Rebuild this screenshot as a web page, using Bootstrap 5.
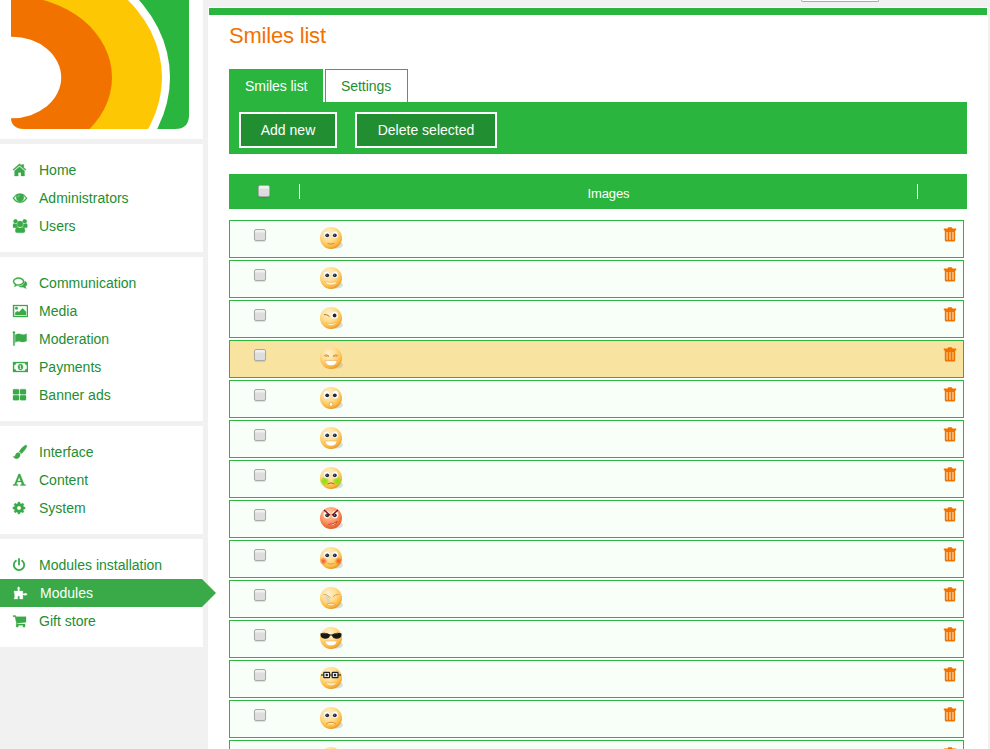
<!DOCTYPE html>
<html lang="en">
<head>
<meta charset="utf-8">
<title>Smiles list</title>
<link href="https://cdn.jsdelivr.net/npm/bootstrap@5.3.0/dist/css/bootstrap.min.css" rel="stylesheet">
<style>
  :root { --leaf: #29b53e; --leaf-dark: #228e32; --menu: #3aaa49; --orange: #f27200; }
  body { background: #f1f1f1; font-family: "Liberation Sans", Arial, sans-serif; font-size: 14px; line-height: 20px; height: 749px; overflow: hidden; letter-spacing: .01px; }
  .side { width: 203px; margin-right: 5px; gap: 5px; }
  .side-logo { height: 139px; }
  .side-logo svg { display: block; }
  .side-menu { padding: 12px 0; }
  .side-menu a { height: 28px; padding-left: 12px; color: var(--leaf-dark); }
  .side-menu svg { width: 16px; height: 16px; margin-right: 11px; fill: var(--menu); stroke: var(--menu); stroke-width: .3; }
  .side-menu a.current { background: var(--menu); color: #fff; width: 216px; position: relative; clip-path: polygon(0 0, 202px 0, 216px 50%, 202px 100%, 0 100%); padding-left: 13px; }
  .side-menu a.current svg { fill: #fff; stroke: #fff; }
  .topline { height: 7px; }
  .topline span { width: 78px; height: 2px; margin-right: 109px; background: #fff; border: 1px solid #aaa; border-top: 0; border-radius: 0 0 2px 2px; }
  .panel { width: 780px; height: 742px; padding: 1px 1px 0; }
  .panel-bar { height: 7px; background: var(--leaf); }
  .panel-body { padding: 0 20px; }
  h1 { font-size: 22px; line-height: 26px; color: var(--orange); margin: 8px 0 20px; font-weight: 400; letter-spacing: -.2px; }
  .tabs { gap: 2px; }
  .tabs a { width: 83px; height: 33px; line-height: 32px; border: 1px solid var(--leaf); border-bottom: 0; padding-left: 15px; color: var(--leaf-dark); letter-spacing: -.05px; }
  .tabs a.current { width: 94px; background: var(--leaf); color: #fff; }
  .tools { height: 52px; background: var(--leaf); padding: 10px; gap: 18px; }
  .tools .btn { --bs-btn-color: #fff; --bs-btn-bg: var(--leaf-dark); --bs-btn-border-color: #fff; --bs-btn-hover-color: #fff; --bs-btn-hover-bg: var(--leaf); border-width: 2px; font-size: 14px; line-height: 20px; height: 36px; padding: 6px 0; letter-spacing: inherit; }
  .w-add { width: 98px; } .w-del { width: 142px; }
  .list-head { height: 35px; background: var(--leaf); margin: 20px 0 11px; font-size: 13px; letter-spacing: -.1px; }
  .list-head .c-check { width: 71px; padding: 1px 0 0 29px; height: 15px; border-right: 1px solid #fff; }
  .list-head .c-del { width: 50px; height: 15px; border-left: 1px solid #fff; }
  .tick { appearance: none; display: block; width: 12px; height: 12px; margin: 0; border: 1px solid #a9a9a9; border-radius: 2px; background: linear-gradient(#f0f0f0 15%, #dedede 35%, #dcdcdc); box-shadow: 0 1px 1px rgba(0,0,0,.12); flex: none; }
  .list-rows { gap: 2px; width: 735px; }
  .smile-row { height: 38px; flex: none; border: 1px solid var(--leaf); background: #f8fff9; padding: 5px 5px 0 24px; }
  .smile-row.hovered { background: #f8e3a0; }
  .smile-row .tick { margin: 3px 53px 0 0; }
  .smile-row svg.face { width: 26px; height: 26px; }
  .smile-row svg.bin { width: 16px; height: 17px; }
</style>
</head>
<body>
<svg width="0" height="0" class="position-absolute">
  <defs>
    <radialGradient id="gold" cx=".4" cy=".3" r=".78"><stop offset="0" stop-color="#fff3d2"/><stop offset=".45" stop-color="#ffdc8c"/><stop offset=".75" stop-color="#fdbb45"/><stop offset="1" stop-color="#dc8610"/></radialGradient>
    <radialGradient id="rage" cx=".42" cy=".3" r=".75"><stop offset="0" stop-color="#ffd0b0"/><stop offset=".5" stop-color="#ff9a6a"/><stop offset="1" stop-color="#e2501e"/></radialGradient>
    <radialGradient id="green"><stop offset="0" stop-color="#8ae010"/><stop offset=".5" stop-color="#96e018" stop-opacity=".85"/><stop offset="1" stop-color="#a8e020" stop-opacity="0"/></radialGradient>
    <radialGradient id="red"><stop offset="0" stop-color="#f45320"/><stop offset="1" stop-color="#f45320" stop-opacity="0"/></radialGradient>
  </defs>
  <symbol id="ball" viewBox="0 0 26 26"><ellipse cx="17.500" cy="19" rx="6.500" ry="3.500" fill="#9aa79c" opacity=".35"/><circle cx="12" cy="12" r="11" fill="url(#gold)"/></symbol>
  <symbol id="eyes" viewBox="0 0 26 26"><g fill="#fff" stroke="#e2c48a" stroke-width=".4"><ellipse cx="7.800" cy="8.800" rx="3.300" ry="3.700"/><ellipse cx="16" cy="8.800" rx="3.300" ry="3.700"/></g><g fill="#222a33"><circle cx="8.200" cy="9.300" r="1.900"/><circle cx="15.800" cy="9.300" r="1.900"/></g><g fill="#b4c4d4"><circle cx="7.800" cy="8.900" r=".5"/><circle cx="15.400" cy="8.900" r=".5"/></g></symbol>
  <symbol id="calm" viewBox="0 0 26 26"><use href="#ball"/><use href="#eyes"/><path d="M8.500 17.500q3.500 1.200 7 0" fill="none" stroke="#c98a30" stroke-width=".9"/></symbol>
  <symbol id="smile" viewBox="0 0 26 26"><use href="#ball"/><use href="#eyes"/><path d="M5.500 15.500q6.500 2.200 13 0-2 3.500-6.500 3.500t-6.500-3.500" fill="#fff6dc" stroke="#e09a35" stroke-width=".4"/></symbol>
  <symbol id="wink" viewBox="0 0 26 26"><use href="#ball"/><ellipse cx="15.600" cy="9.200" rx="3.400" ry="3.500" fill="#fff"/><circle cx="15.600" cy="9.500" r="1.900" fill="#222a33"/><path d="M5 8.600q3-.6 5.500 2" fill="none" stroke="#c0702a" stroke-width="1"/><path d="M7 17q6 1.800 11-.8-1.500 3-6 3.200-3 .2-5-2.400" fill="#fff6dc" stroke="#e09a35" stroke-width=".4"/></symbol>
  <symbol id="laugh" viewBox="0 0 26 26"><use href="#ball"/><path d="M5 9.500q3-1.800 5 .8-2-.6-4 0M19 9.500q-3-1.800-5 .8 2-.6 4 0" fill="none" stroke="#c98232" stroke-width=".8"/><path d="M6 14.500h12q-.6 5.200-6 5.200t-6-5.200" fill="#fff" stroke="#e0a04a" stroke-width=".5"/></symbol>
  <symbol id="wow" viewBox="0 0 26 26"><use href="#ball"/><g fill="#fff" stroke="#e2c48a" stroke-width=".4"><ellipse cx="7.600" cy="8.800" rx="3.400" ry="4.200"/><ellipse cx="16.400" cy="8.800" rx="3.400" ry="4.200"/></g><circle cx="8.200" cy="9.300" r="1.900" fill="#222a33"/><circle cx="15.800" cy="9.300" r="1.900" fill="#222a33"/><ellipse cx="12" cy="18.300" rx="1.700" ry="2.100" fill="#fffbe8" stroke="#d58a22" stroke-width=".5"/></symbol>
  <symbol id="grin" viewBox="0 0 26 26"><use href="#ball"/><use href="#eyes"/><path d="M6 15h12q-.6 5-6 5t-6-5" fill="#fff" stroke="#e0a04a" stroke-width=".5"/></symbol>
  <symbol id="sick" viewBox="0 0 26 26"><use href="#ball"/><circle cx="5.700" cy="15" r="5" fill="url(#green)"/><circle cx="18.300" cy="15" r="5" fill="url(#green)"/><use href="#eyes"/><path d="M8.500 18q3.500-2.400 7 0" fill="none" stroke="#ad6a1c" stroke-width="1"/></symbol>
  <symbol id="angry" viewBox="0 0 26 26"><ellipse cx="17.500" cy="19" rx="6.500" ry="3.500" fill="#9aa79c" opacity=".35"/><circle cx="12" cy="12" r="11" fill="url(#rage)"/><use href="#eyes"/><path d="M5 4l6 5.200M19 4l-6 5.200" stroke="#8c1414" stroke-width="1.500"/><path d="M9.500 18.500q5-.2 8.500-3-1 2.800-3 3" fill="#fff" stroke="#b23616" stroke-width=".8"/></symbol>
  <symbol id="blush" viewBox="0 0 26 26"><use href="#ball"/><circle cx="4.500" cy="15" r="4.200" fill="url(#red)"/><circle cx="19.500" cy="15" r="4.200" fill="url(#red)"/><use href="#eyes"/><path d="M8.500 17.400q3.500 1.400 7 0" fill="none" stroke="#d8983b" stroke-width=".8"/></symbol>
  <symbol id="cry" viewBox="0 0 26 26"><use href="#ball"/><path d="M4.500 8.500q3-.6 5.500 2.200M19.500 8.500q-3-.6-5.500 2.200" fill="none" stroke="#d0924d" stroke-width=".8"/><g fill="#e6ecf6" stroke="#a8aec8" stroke-width=".5"><circle cx="7.500" cy="11.500" r=".9"/><circle cx="10.500" cy="11.500" r=".9"/><circle cx="9" cy="14.500" r="1"/></g><path d="M7.500 18.800q4.500-3.600 9 0" fill="#fff3cf" stroke="#d5943a" stroke-width=".8"/></symbol>
  <symbol id="cool" viewBox="0 0 26 26"><use href="#ball"/><path d="M1.500 7.500q5-2 9.500 1h2q4.500-3 9.500-1 .4 5-4.500 5.300-4 .2-5-3.300h-2q-1 3.500-5 3.300-5-.3-4.500-5.300" fill="#161616"/><path d="M3.500 8q2-1 4-.4M15 8q2-1 4-.4" stroke="#686868" stroke-width=".7" fill="none"/><path d="M6 15h12q-.6 4.800-6 4.800t-6-4.800" fill="#fff" stroke="#e0a04a" stroke-width=".5"/></symbol>
  <symbol id="nerd" viewBox="0 0 26 26"><use href="#ball"/><path d="M2 9h20" stroke="#222" stroke-width="1.100"/><g fill="#e8eef3" stroke="#222" stroke-width="1.200"><rect x="4.800" y="6.300" width="5.800" height="5.400" rx=".6"/><rect x="13.200" y="6.300" width="5.800" height="5.400" rx=".6"/></g><circle cx="7.800" cy="9" r="1.200" fill="#222"/><circle cx="16" cy="9" r="1.200" fill="#222"/><path d="M6.500 16.500q5.500 1.600 11 0-1.500 3-5.500 3t-5.500-3" fill="#fff6dc" stroke="#e09a35" stroke-width=".4"/></symbol>
  <symbol id="sad" viewBox="0 0 26 26"><use href="#ball"/><use href="#eyes"/><path d="M7 18.200q5-4 10 0" fill="#ffe9b8" stroke="#cf8a30" stroke-width=".9"/></symbol>
  <symbol id="bin" viewBox="0 0 16 17"><path fill="#f27200" fill-rule="evenodd" d="M6.200 1.200h3.600l.7 1.300h3.700v1.900h-1V14q0 1.500-1.400 1.500H4.200Q2.800 15.500 2.800 14V4.400h-1V2.500h3.700zM4.500 6v7.800h1.100V6zm2.900 0v7.800h1.200V6zm3 0v7.800h1.100V6z"/><path fill="#f27200" opacity=".35" d="M4.500 6h1.100v7.800H4.500zm2.900 0h1.200v7.800H7.400zm3 0h1.100v7.800h-1.100z"/></symbol>
</svg>

<div class="d-flex align-items-start">
  <aside class="side d-flex flex-column flex-shrink-0">
    <div class="side-logo bg-white">
      <svg width="203" height="139" viewBox="0 0 203 139">
        <clipPath id="tile"><path d="M11-10H189V115q0 14-14 14H25q-14 0-14-12z"/></clipPath>
        <g clip-path="url(#tile)">
          <rect width="203" height="139" fill="#29b53e"/>
          <ellipse cx="12" cy="77.500" rx="158" ry="130" fill="#fff"/>
          <ellipse cx="12" cy="77.500" rx="150" ry="122" fill="#fdc704"/>
          <ellipse cx="12" cy="77.500" rx="100" ry="81.500" fill="#f27200"/>
          <ellipse cx="12" cy="77.500" rx="49.200" ry="40.800" fill="#fff"/>
        </g>
      </svg>
    </div>
    <nav class="side-menu bg-white d-flex flex-column">
      <a href="#" class="d-flex align-items-center text-decoration-none"><svg viewBox="0 0 16 16"><path d="M7.500 4.800l5 4V14H9v-3.500H6.200V14H2.600V8.800zM7.500 1.800L9.600 3.600V2.500h2.200v3l2.300 1.900-.8.900-5.800-4.700L1.700 8.300.9 7.400z"/></svg>Home</a>
      <a href="#" class="d-flex align-items-center text-decoration-none"><svg viewBox="0 0 16 16"><path fill-rule="evenodd" d="M.8 8.200Q3.600 3.500 8 3.500t7.200 4.700Q12.400 12.700 8 12.700T.8 8.200zm1.300 0Q4.500 11.600 8 11.600t5.900-3.400q-1-1.700-2.500-2.600a3.900 3.900 0 1 1-6.800 0Q3.100 6.500 2.100 8.200zM6 7.400q.3-1.600 2-1.900v-.6q-2.500.3-2.600 2.500z"/></svg>Administrators</a>
      <a href="#" class="d-flex align-items-center text-decoration-none"><svg viewBox="0 0 16 16"><circle cx="3.500" cy="3.300" r="2"/><circle cx="12.700" cy="3.300" r="2"/><circle cx="8.100" cy="6" r="2.900"/><path d="M1 9V7q0-1.500 1.500-1.400.8.700 2.200.2 0 2 1.100 3.100Q4.500 9 3.700 9.700H2Q1 9.700 1 9zM15.300 9V7q0-1.500-1.500-1.400-.8.700-2.200.2 0 2-1.100 3.100 1.300.1 2.100.8h1.700q1 0 1-.7zM3.300 13q0-3.600 2.400-3.700 2.400 1.300 4.800 0Q13 9.400 13 13q0 1.800-1.700 1.800H5q-1.700 0-1.700-1.800z"/></svg>Users</a>
    </nav>
    <nav class="side-menu bg-white d-flex flex-column">
      <a href="#" class="d-flex align-items-center text-decoration-none"><svg viewBox="0 0 16 16"><path fill-rule="evenodd" d="M6.500 2.600c3.200 0 5.700 1.800 5.700 4s-2.500 4-5.700 4l-1.300-.1q-1.400 1.100-3.200 1.200 1-.9 1-2Q1 8.400 1 6.600c0-2.200 2.300-4 5.500-4zm0 1.100C4 3.700 2.100 5 2.100 6.600q0 1.300 2.200 2.300l-.2.900 1-.6 1.400.2c2.500 0 4.500-1.300 4.500-2.800S9 3.700 6.500 3.700zM13 6q2 1 2 2.900 0 1.500-1.600 2.600.2 1.100 1 1.900-1.900-.1-3.100-1.200-2.900.4-4.700-.9Q12 11.200 13 6z"/></svg>Communication</a>
      <a href="#" class="d-flex align-items-center text-decoration-none"><svg viewBox="0 0 16 16"><path fill-rule="evenodd" d="M1 2h15v12H1zm1.100 1.100v9.800h12.800V3.100zM3.200 12V9.700L5.500 7.900l1.400 1.300 3.700-3.900 3.400 3.500V12z"/><circle cx="4.500" cy="5.300" r="1.300"/></svg>Media</a>
      <a href="#" class="d-flex align-items-center text-decoration-none"><svg viewBox="0 0 16 16"><path d="M1.300 2.300a1.100 1.100 0 1 1 1.300 0V14.500H1.300zM3.300 3.800Q6.500 2 9 3.300q2.500 1 5.600-.5V10q-3 1.800-5.600.7-2.500-1.200-5.700.6z"/></svg>Moderation</a>
      <a href="#" class="d-flex align-items-center text-decoration-none"><svg viewBox="0 0 16 16"><path fill-rule="evenodd" d="M1 3h15v10H1zm3.200 1.100Q4 5.900 2.100 6.100v3.800q1.900.2 2.100 2h8.600q.2-1.800 2.100-2V6.100q-1.900-.2-2.100-2zM8.500 5C10 5 11 6.200 11 8s-1 3-2.500 3S6 9.800 6 8s1-3 2.500-3zm-.3 1.300L7.200 7.200l.4.500.4-.3v2H7.200v.7h2.600v-.7H9V6.300z"/></svg>Payments</a>
      <a href="#" class="d-flex align-items-center text-decoration-none"><svg viewBox="0 0 16 16"><rect x="1" y="2.200" width="6" height="5" rx=".9"/><rect x="8" y="2.200" width="6" height="5" rx=".9"/><rect x="1" y="8.200" width="6" height="5" rx=".9"/><rect x="8" y="8.200" width="6" height="5" rx=".9"/></svg>Banner ads</a>
    </nav>
    <nav class="side-menu bg-white d-flex flex-column">
      <a href="#" class="d-flex align-items-center text-decoration-none"><svg viewBox="0 0 16 16"><path d="M13.400 1q1.900 0 1.500 1.800Q13 6.500 10.200 9L8.900 9.800Q8.600 8.300 7 7.800 9.500 3.300 13.400 1zM6.300 8.600q1.800.4 2 2.200-.4 3.700-4 4Q2 14.700 1 12.300q1.500.7 2-.6 1.200-3.200 3.300-3.100z"/></svg>Interface</a>
      <a href="#" class="d-flex align-items-center text-decoration-none"><svg viewBox="0 0 16 16"><path fill-rule="evenodd" d="M6.600 2h1.500l4.100 10.200 1.500.5v.8H8.400v-.8l1.500-.4-.8-2.300H5.200l-.8 2.200 1.700.5v.8H1v-.8l1.500-.5zM5.600 8.900h3.100L7.100 5z"/></svg>Content</a>
      <a href="#" class="d-flex align-items-center text-decoration-none"><svg viewBox="0 0 16 16"><path fill-rule="evenodd" d="M6.100 2h1.800l.4 1.500 1 .4 1.400-.8 1.300 1.300-.8 1.400.4 1 1.500.4v1.700l-1.500.4-.4 1 .8 1.300-1.300 1.300-1.400-.8-1 .4L7.900 14H6.100l-.4-1.500-1-.4-1.400.8L2 11.600l.8-1.300-.4-1L.9 8.900V7.200l1.500-.4.4-1L2 4.400l1.300-1.300 1.400.8 1-.4zM7 5.900a2.100 2.100 0 1 0 0 4.200 2.100 2.100 0 1 0 0-4.200z"/></svg>System</a>
    </nav>
    <nav class="side-menu bg-white d-flex flex-column">
      <a href="#" class="d-flex align-items-center text-decoration-none"><svg viewBox="0 0 16 16"><path d="M3.900 3.700A5.200 5.200 0 1 0 10.100 3.700" fill="none" stroke-width="1.800" stroke-linecap="round"/><path d="M7 2v5.500" stroke-width="1.800" stroke-linecap="round"/></svg>Modules installation</a>
      <a href="#" class="current d-flex align-items-center text-decoration-none"><svg viewBox="0 0 16 16"><path d="M1 6h3.500q1-.3.300-1.500Q4 2 5.600 1.800 7.300 2 6.500 4.500 5.800 5.700 6.800 6h3v2.200q.3 1 1.500.3Q14 7.800 14 9.300t-2.700.9q-1.200-.8-1.500.3V14H7q-1-.2-.2-1.200.7-1.800-1-1.900-1.800.1-1.100 1.900.7 1-.3 1.200H1q1.200-2 .6-4.200Z"/></svg>Modules</a>
      <a href="#" class="d-flex align-items-center text-decoration-none"><svg viewBox="0 0 16 16"><path d="M1 2.600h2.600l.4 1.100h10v5.500L5.300 10.200l.1.900H13v1.100H4.300L4.400 10 3 3.700H1z"/><circle cx="5.200" cy="13" r="1.200"/><circle cx="12" cy="13" r="1.200"/></svg>Gift store</a>
    </nav>
  </aside>

  <main>
    <div class="topline d-flex justify-content-end"><span></span></div>
    <div class="panel bg-white">
      <div class="panel-bar"></div>
      <div class="panel-body">
        <h1>Smiles list</h1>
        <div class="tabs d-flex">
          <a href="#" class="current text-decoration-none">Smiles list</a>
          <a href="#" class="text-decoration-none">Settings</a>
        </div>
        <div class="tools d-flex">
          <button class="btn rounded-0 w-add">Add new</button>
          <button class="btn rounded-0 w-del">Delete selected</button>
        </div>
        <div class="list-head d-flex align-items-center text-white">
          <div class="c-check"><input type="checkbox" class="tick"></div>
          <div class="flex-fill text-center pt-1">Images</div>
          <div class="c-del"></div>
        </div>
        <div class="list-rows d-flex flex-column">
          <div class="smile-row d-flex align-items-start"><input type="checkbox" class="tick"><svg class="face"><use href="#calm"/></svg><svg class="bin ms-auto"><use href="#bin"/></svg></div>
          <div class="smile-row d-flex align-items-start"><input type="checkbox" class="tick"><svg class="face"><use href="#smile"/></svg><svg class="bin ms-auto"><use href="#bin"/></svg></div>
          <div class="smile-row d-flex align-items-start"><input type="checkbox" class="tick"><svg class="face"><use href="#wink"/></svg><svg class="bin ms-auto"><use href="#bin"/></svg></div>
          <div class="smile-row hovered d-flex align-items-start"><input type="checkbox" class="tick"><svg class="face"><use href="#laugh"/></svg><svg class="bin ms-auto"><use href="#bin"/></svg></div>
          <div class="smile-row d-flex align-items-start"><input type="checkbox" class="tick"><svg class="face"><use href="#wow"/></svg><svg class="bin ms-auto"><use href="#bin"/></svg></div>
          <div class="smile-row d-flex align-items-start"><input type="checkbox" class="tick"><svg class="face"><use href="#grin"/></svg><svg class="bin ms-auto"><use href="#bin"/></svg></div>
          <div class="smile-row d-flex align-items-start"><input type="checkbox" class="tick"><svg class="face"><use href="#sick"/></svg><svg class="bin ms-auto"><use href="#bin"/></svg></div>
          <div class="smile-row d-flex align-items-start"><input type="checkbox" class="tick"><svg class="face"><use href="#angry"/></svg><svg class="bin ms-auto"><use href="#bin"/></svg></div>
          <div class="smile-row d-flex align-items-start"><input type="checkbox" class="tick"><svg class="face"><use href="#blush"/></svg><svg class="bin ms-auto"><use href="#bin"/></svg></div>
          <div class="smile-row d-flex align-items-start"><input type="checkbox" class="tick"><svg class="face"><use href="#cry"/></svg><svg class="bin ms-auto"><use href="#bin"/></svg></div>
          <div class="smile-row d-flex align-items-start"><input type="checkbox" class="tick"><svg class="face"><use href="#cool"/></svg><svg class="bin ms-auto"><use href="#bin"/></svg></div>
          <div class="smile-row d-flex align-items-start"><input type="checkbox" class="tick"><svg class="face"><use href="#nerd"/></svg><svg class="bin ms-auto"><use href="#bin"/></svg></div>
          <div class="smile-row d-flex align-items-start"><input type="checkbox" class="tick"><svg class="face"><use href="#sad"/></svg><svg class="bin ms-auto"><use href="#bin"/></svg></div>
          <div class="smile-row d-flex align-items-start"><input type="checkbox" class="tick"><svg class="face"><use href="#calm"/></svg><svg class="bin ms-auto"><use href="#bin"/></svg></div>
        </div>
      </div>
    </div>
  </main>
</div>
<script src="https://cdn.jsdelivr.net/npm/bootstrap@5.3.0/dist/js/bootstrap.bundle.min.js"></script>
</body>
</html>
